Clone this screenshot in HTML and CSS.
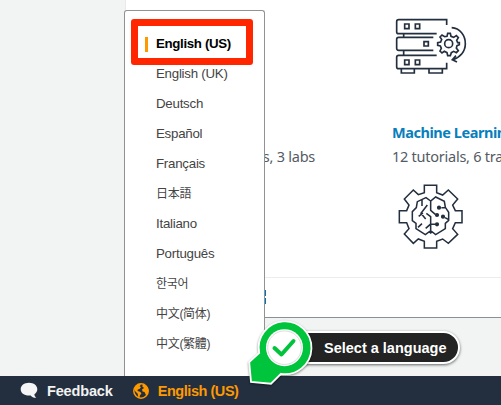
FILE: index.html
```html
<!DOCTYPE html>
<html lang="en">
<head>
<meta charset="utf-8">
<title>Language settings</title>
<link rel="stylesheet" href="styles.css">
</head>
<body>
<main class="page">
  <section class="panel">
    <div class="topics">
      <p class="summary summary-left">3 tutorials, 3 labs</p>
      <article class="topic">
        <svg class="server" viewBox="0 0 255 210" width="85" height="70" fill="none" stroke="#232f3e" stroke-width="5">
          <path d="M185 45V29H41q-6 0-6 6v30q0 6 6 6H155M145 82H41q-6 0-6 6v27q0 6 6 6h104M155 136H41q-6 0-6 6v28q0 6 6 6h144V158M56 71v11M56 121v15M49 176v13h39v-13M132 176v13h40v-13"/>
          <path d="M59 42h13v14H59zM91 42h13v14H91zM117 95h13v13h-13zM59 150h13v14H59zM91 150h13v14H91z"/>
          <path d="M186 79l2-9h8l2 9 8 3 8-5 6 6-5 8 3 7h5v6l-7 3-2 7 6 8-6 6-8-4-7 4-3 9h-8l-2-9-8-4-7 5-6-6 4-8-3-7-8-2v-8l9-2 3-8-5-7 6-6 8 5z"/>
          <circle cx="191" cy="101" r="12"/>
          <path d="M200 53C225 54 241 77 241 101C241 124 226 142 203 149M213 137l-11 12 14 7"/>
        </svg>
        <h2>Machine Learning</h2>
        <p class="summary">12 tutorials, 6 trainings</p>
        <svg class="brain" viewBox="0 0 240 225" width="80" height="75" fill="none" stroke="#232f3e" stroke-width="4.6">
          <path d="M103 22h37v22l18 7 17-15 28 27-15 18 8 17h20v36h-20l-8 18 15 17-28 27-17-13-18 7v20h-37v-20l-18-7-15 13-27-28 14-16-7-18H28V98h22l7-17-14-18 27-27 15 14 18-6z"/>
          <path d="M122 69l-14-10-26 12-3 18-12 12v27l11 8v16l28 18 16-12 15 12 29-18v-16l10-9v-24l-10-15-3-18-26-13zM122 69v28l14 12M96 66v18M112 81l-19 25 14 17M86 115l13-10M109 106l13 10v51M84 148l12-11M107 151l14-12h15M154 89h13M165 119l11 6"/>
          <g fill="#232f3e"><circle cx="147" cy="89" r="4"/><circle cx="141" cy="111" r="4"/><circle cx="159" cy="116" r="4"/><circle cx="141" cy="139" r="4"/></g>
        </svg>
      </article>
    </div>
    <div class="more"><span class="more-link"></span></div>
  </section>
</main>
<footer class="bar">
  <span class="bar-item">
    <svg viewBox="0 0 18 17" width="18" height="17"><path fill="#f5f5f5" d="M9 .8c4.800 0 8.300 2.800 8.300 6.400 0 2.100-1.100 3.800-2.900 5 .1 1.700.8 2.600 1.900 3.500-2.600.1-4.400-.7-5.600-2.300-5.800.7-10-2-10-6.200C.7 3.600 4.200.8 9 .8z"/></svg>
    <span class="feedback">Feedback</span>
  </span>
  <span class="bar-item current">
    <svg viewBox="0 0 16 16" width="16" height="16"><circle cx="8" cy="8" r="7.200" fill="#232f3e" stroke="#ff9900" stroke-width="1.500"/><path fill="#ff9900" d="M1 6l2-3.500L7 .8l1 1-1.500 1.500L8 4 6.500 6 4.800 6.500 4.500 8l2.500.8 1.500 1.500-1.600 2.200-.4 2.300-1.200-.4-.6-3.600L2 8zM9 3l2-2 3 2.500L15.500 7l-.7 4-1.800 1-1.500-3-2-.5-.5-2L11 5z"/></svg>
    <span class="language">English (US)</span>
  </span>
</footer>

<ul class="menu">
  <li class="selected">English (US)</li>
  <li>English (UK)</li>
  <li>Deutsch</li>
  <li>Español</li>
  <li>Français</li>
  <li class="cjk" lang="ja">日本語</li>
  <li>Italiano</li>
  <li>Português</li>
  <li class="cjk" lang="ko">한국어</li>
  <li class="cjk" lang="zh-Hans">中文(简体)</li>
  <li class="cjk" lang="zh-Hant">中文(繁體)</li>
</ul>
<div class="highlight"></div>

<div class="callout">
  <div class="callout-label">Select a language</div>
  <svg class="pin" viewBox="0 0 74 74" width="74" height="74">
    <path d="M14.200 40A26.400 26.400 0 1 1 36 60.800L26 70.700 6 68.900 4.200 49.200z" fill="#00c43b" stroke="#fff" stroke-width="1.800"/>
    <circle cx="39.500" cy="34.700" r="18.500" fill="#fff"/>
    <circle cx="39.500" cy="34.700" r="16.800" fill="#fff" stroke="#ddd" stroke-width="1"/>
    <path d="M29.500 35l7 6.500 12-13.500" fill="none" stroke="#00c43b" stroke-width="4" stroke-linecap="round" stroke-linejoin="round"/>
  </svg>
</div>
</body>
</html>
```
FILE: styles.css
```css
* { box-sizing: border-box; }
body {
  margin: 0;
  width: 501px;
  height: 405px;
  overflow: hidden;
  position: relative;
  display: grid;
  grid-template-rows: 376px 29px;
  background: #f2f3f3;
  font-family: "Liberation Sans", "Noto Sans CJK SC", sans-serif;
}
.page { padding-left: 125px; overflow: hidden; }
.panel {
  height: 318px;
  background: #fff;
  border-left: 1px solid #e8eaea;
  border-bottom: 1px solid #879196;
}
.topics {
  height: 277px;
  display: grid;
  grid-template-columns: 189px 200px;
  column-gap: 77px;
}
.topic { padding-top: 10px; }
.topic svg { display: block; }
.server { margin-left: -7px; }
.brain { margin: 10px 0 0 -2px; }
h2, .summary {
  margin: 0;
  height: 24px;
  line-height: 24px;
  white-space: nowrap;
  font-family: "Noto Sans", sans-serif;
}
h2 {
  margin-top: 40px;
  font-size: 14.5px;
  letter-spacing: -.45px;
  color: #087ebd;
}
.summary { font-size: 14.5px; letter-spacing: -.25px; color: #545b64; }
.summary-left { padding-top: 144px; height: 168px; text-align: right; }
.more { height: 40px; padding: 12px 0 0 139px; border-top: 1px solid #eaeded; }
.more-link {
  display: block;
  width: 1px;
  height: 14px;
  background: linear-gradient(#0073bb 6px, transparent 6px 8px, #0073bb 8px);
}
.bar {
  display: flex;
  align-items: center;
  gap: 20px;
  padding-left: 20px;
  background: #232f3e;
  color: #f2f2f2;
  font-size: 14.5px;
  font-weight: bold;
}
.bar-item { display: flex; align-items: center; gap: 9px; }
.feedback { letter-spacing: -.15px; }
.language { letter-spacing: -.45px; }
.current { color: #ff9900; }
.menu {
  position: absolute;
  left: 124px;
  top: 10px;
  width: 141px;
  height: 366px;
  margin: 0;
  padding: 18px 0 0 31px;
  list-style: none;
  background: #fff;
  border: 1px solid #929292;
  border-bottom: 0;
  border-radius: 3px 3px 0 0;
  color: #444;
  font-size: 13.3px;
  letter-spacing: -.25px;
}
.menu li { height: 30px; line-height: 30px; white-space: nowrap; }
.menu .cjk { font-size: 12px; letter-spacing: -.3px; }
.menu .selected {
  display: flex;
  align-items: center;
  margin-left: -11px;
  color: #000;
  font-weight: bold;
  letter-spacing: -.35px;
}
.selected::before {
  content: "";
  width: 3px;
  height: 15px;
  margin-right: 8px;
  background: #ff9900;
}
.highlight {
  position: absolute;
  left: 131px;
  top: 19px;
  width: 122px;
  height: 46px;
  border: 7px solid #ff2600;
  border-radius: 3px;
}
.callout {
  position: absolute;
  left: 245px;
  top: 313px;
  width: 216px;
  height: 75px;
}
.callout-label {
  margin: 18px 0 0 40px;
  width: 175px;
  height: 33px;
  padding-left: 37px;
  border: 2px solid #fff;
  border-radius: 17px;
  background: #232323;
  box-shadow: 0 1px 3px rgba(0, 0, 0, .6);
  color: #fff;
  font-size: 14.5px;
  font-weight: bold;
  line-height: 31px;
  white-space: nowrap;
}
.pin {
  position: absolute;
  left: 0;
  top: 0;
  overflow: visible;
  filter: drop-shadow(0 1px 1px rgba(0, 0, 0, .45));
}
```
